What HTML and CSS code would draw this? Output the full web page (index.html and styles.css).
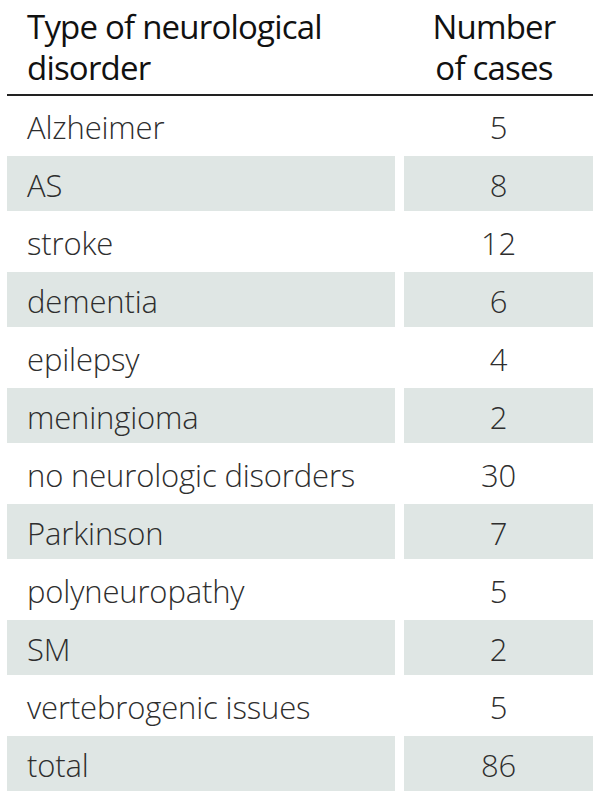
FILE: index.html
```html
<!DOCTYPE html>
<html lang="en">
<head>
<meta charset="utf-8">
<title>Neurological disorders</title>
<link rel="stylesheet" href="styles.css">
</head>
<body>
<div class="table">
  <div class="head">
    <div class="hcell name">Type of neurological<br>disorder</div>
    <div class="hcell num">Number<br>of cases</div>
  </div>
  <div class="rows">
    <div class="cell name">Alzheimer</div><div class="cell num">5</div>
    <div class="cell name alt">AS</div><div class="cell num alt">8</div>
    <div class="cell name">stroke</div><div class="cell num">12</div>
    <div class="cell name alt">dementia</div><div class="cell num alt">6</div>
    <div class="cell name">epilepsy</div><div class="cell num">4</div>
    <div class="cell name alt">meningioma</div><div class="cell num alt">2</div>
    <div class="cell name">no neurologic disorders</div><div class="cell num">30</div>
    <div class="cell name alt">Parkinson</div><div class="cell num alt">7</div>
    <div class="cell name">polyneuropathy</div><div class="cell num">5</div>
    <div class="cell name alt">SM</div><div class="cell num alt">2</div>
    <div class="cell name">vertebrogenic issues</div><div class="cell num">5</div>
    <div class="cell name alt">total</div><div class="cell num alt">86</div>
  </div>
</div>
</body>
</html>
```
FILE: styles.css
```css
html, body {
  margin: 0;
  padding: 0;
  background: #ffffff;
}
body {
  font-family: "Open Sans", "Noto Sans", sans-serif;
}
.table {
  width: 586px;
  margin-left: 7px;
}
.head {
  display: grid;
  grid-template-columns: 388px 198px;
  border-bottom: 2px solid #222;
  height: 96px;
  box-sizing: border-box;
  padding-top: 6px;
}
.hcell {
  font-size: 33px;
  line-height: 41px;
  color: #111;
  letter-spacing: -0.8px;
}
.hcell.name {
  padding-left: 20px;
}
.hcell.num {
  text-align: center;
}
.rows {
  display: grid;
  grid-template-columns: 388px 189px;
  column-gap: 9px;
  row-gap: 3px;
  grid-auto-rows: 55px;
  margin-top: 2px;
}
.cell {
  font-size: 31px;
  font-weight: 300;
  color: #2e2e2e;
  display: flex;
  align-items: center;
  letter-spacing: -0.15px;
  padding-top: 2px;
  box-sizing: border-box;
}
.cell.name {
  padding-left: 20px;
}
.cell.num {
  justify-content: center;
}
.cell.alt {
  background: #dfe6e4;
}
```
